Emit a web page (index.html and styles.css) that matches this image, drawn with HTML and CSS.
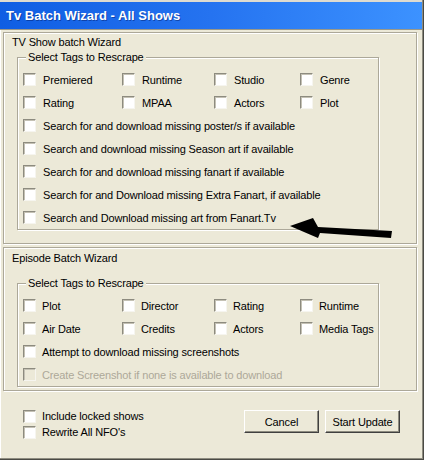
FILE: index.html
```html
<!DOCTYPE html>
<html>
<head>
<meta charset="utf-8">
<link rel="stylesheet" href="styles.css">
</head>
<body>
<div class="window">
  <div class="titlebar">Tv Batch Wizard - All Shows</div>
  <div class="content">
    <section class="panel panel-show">
      <div class="panel-title">TV Show batch Wizard</div>
      <div class="group group-show">
        <div class="legend">Select Tags to Rescrape</div>
        <div class="grid">
          <label class="check"><input type="checkbox"><span>Premiered</span></label>
          <label class="check"><input type="checkbox"><span>Runtime</span></label>
          <label class="check"><input type="checkbox"><span>Studio</span></label>
          <label class="check"><input type="checkbox"><span>Genre</span></label>
          <label class="check"><input type="checkbox"><span>Rating</span></label>
          <label class="check"><input type="checkbox"><span>MPAA</span></label>
          <label class="check"><input type="checkbox"><span>Actors</span></label>
          <label class="check"><input type="checkbox"><span>Plot</span></label>
          <label class="check wide"><input type="checkbox"><span>Search for and download missing poster/s if available</span></label>
          <label class="check wide"><input type="checkbox"><span>Search and download missing Season art if available</span></label>
          <label class="check wide"><input type="checkbox"><span>Search for and download missing fanart if available</span></label>
          <label class="check wide"><input type="checkbox"><span>Search for and Download missing Extra Fanart, if available</span></label>
          <label class="check wide"><input type="checkbox"><span>Search and Download missing art from Fanart.Tv</span></label>
        </div>
      </div>
    </section>
    <section class="panel panel-episode">
      <div class="panel-title">Episode Batch Wizard</div>
      <div class="group group-episode">
        <div class="legend">Select Tags to Rescrape</div>
        <div class="grid">
          <label class="check"><input type="checkbox"><span>Plot</span></label>
          <label class="check"><input type="checkbox"><span>Director</span></label>
          <label class="check"><input type="checkbox"><span>Rating</span></label>
          <label class="check"><input type="checkbox"><span>Runtime</span></label>
          <label class="check"><input type="checkbox"><span>Air Date</span></label>
          <label class="check"><input type="checkbox"><span>Credits</span></label>
          <label class="check"><input type="checkbox"><span>Actors</span></label>
          <label class="check"><input type="checkbox"><span>Media Tags</span></label>
          <label class="check wide"><input type="checkbox"><span>Attempt to download missing screenshots</span></label>
          <label class="check wide disabled"><input type="checkbox" disabled><span>Create Screenshot if none is available to download</span></label>
        </div>
      </div>
    </section>
    <div class="footer">
      <div class="footer-checks">
        <label class="check"><input type="checkbox"><span>Include locked shows</span></label>
        <label class="check"><input type="checkbox"><span>Rewrite All NFO's</span></label>
      </div>
      <div class="buttons">
        <button class="btn">Cancel</button>
        <button class="btn">Start Update</button>
      </div>
    </div>
  </div>
  <svg class="arrow" width="424" height="460" viewBox="0 0 424 460">
    <polygon points="290,226 313,218 318,227 392,231 391,238 320,233 318,238" fill="#000"/>
  </svg>
</div>
</body>
</html>
```
FILE: styles.css
```css
* { box-sizing: border-box; }

body {
  margin: 0;
  background: #ECE9D8;
  font-family: "Liberation Sans", Arial, sans-serif;
  font-size: 11px;
  letter-spacing: -0.15px;
  color: #000;
}

.window {
  position: relative;
  width: 424px;
  height: 460px;
  background: #ECE9D8;
  box-shadow: inset -1px 0 #4a4a44, inset 0 -1px #4a4a44, inset -2px -2px #8e8c80, inset 1px 0 #fff;
}

.titlebar {
  height: 30px;
  margin-right: 2px;
  border-top: 2px solid #dedbd0;
  border-bottom: 1px solid #9a9889;
  background: linear-gradient(to right, #0f5ee3 0%, #2573f0 50%, #3c92ff 100%);
  color: #fff;
  font-weight: bold;
  font-size: 13px;
  letter-spacing: 0;
  line-height: 27px;
  padding-left: 6px;
  text-shadow: 1px 1px rgba(0, 20, 90, 0.45);
}

.content {
  padding: 2px 7px 0 3px;
}

.panel {
  border: 1px solid #aca899;
  box-shadow: inset 1px 1px #fff, 1px 1px #fff;
}

.panel-show {
  height: 212px;
  padding-top: 2px;
}

.panel-episode {
  height: 144px;
  margin-top: 3px;
  padding-top: 3px;
}

.panel-title {
  margin-left: 8px;
  line-height: 15px;
}

.group {
  width: 362px;
  margin-left: 13px;
  border: 1px solid #aca899;
  box-shadow: inset 1px 1px #fff, 1px 1px #fff;
}

.group-show { margin-top: 7px; }
.group-episode { margin-top: 17px; }

.legend {
  width: max-content;
  margin: -8px 0 0 8px;
  padding: 0 2px;
  line-height: 15px;
  background: #ECE9D8;
}

.grid {
  display: grid;
  grid-template-columns: 99px 92px 86px 1fr;
  grid-auto-rows: 23px;
  margin-top: 3px;
  padding-left: 5px;
}

.check {
  display: flex;
  align-items: center;
  gap: 7px;
  white-space: nowrap;
}

.group-episode .check { gap: 6px; }

.check.wide { grid-column: 1 / -1; }

.check input {
  appearance: none;
  -webkit-appearance: none;
  flex: none;
  margin: 0;
  width: 13px;
  height: 13px;
  background: #fff;
  border: 1px solid;
  border-color: #8d8b7f #f6f5ef #f6f5ef #8d8b7f;
  box-shadow: inset 1px 1px #c4c1b4;
}

.check.disabled { color: #aca899; }
.check.disabled input { background: #ECE9D8; }

.footer {
  display: flex;
  align-items: flex-start;
  padding: 17px 17px 0 20px;
}

.footer .check {
  height: 16px;
  gap: 6px;
}

.buttons {
  display: flex;
  gap: 6px;
  margin-left: auto;
  margin-top: 2px;
}

.btn {
  width: 75px;
  height: 23px;
  padding: 0;
  background: #ECE9D8;
  border: 1px solid;
  border-color: #fff #404040 #404040 #fff;
  box-shadow: inset -1px -1px #8d8b7f;
  font-family: inherit;
  font-size: 11px;
  letter-spacing: -0.15px;
  color: #000;
}

.arrow {
  position: absolute;
  left: 0;
  top: 0;
  pointer-events: none;
}
```
